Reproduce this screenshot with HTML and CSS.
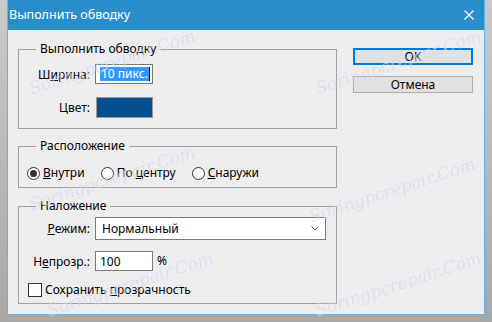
FILE: index.html
```html
<!DOCTYPE html>
<html>
<head>
<link rel="stylesheet" href="styles.css">
</head>
<body>
<div class="window">
 <div class="titlebar">
  <span class="title">Выполнить обводку</span>
  <svg class="close" width="10" height="10" viewBox="0 0 10 10"><path d="M0.5 0.5 L9.5 9.5 M9.5 0.5 L0.5 9.5" stroke="#fff" stroke-width="1.1" fill="none"/></svg>
 </div>
 <div class="main">
  <div class="left">
   <fieldset class="group g-stroke">
    <legend>Выполнить обводку</legend>
    <div class="fields">
     <label>Ш<u>и</u>рина:</label>
     <div class="input short"><span class="selected">10 пикс.</span><span class="caret"></span></div>
     <label>Цвет:</label>
     <div class="swatch"></div>
    </div>
   </fieldset>

   <fieldset class="group g-place">
    <legend>Расположение</legend>
    <div class="radios">
     <span class="radio checked"></span><span class="rlabel"><u>В</u>нутри</span>
     <span class="radio"></span><span class="rlabel">По <u>ц</u>ентру</span>
     <span class="radio"></span><span class="rlabel"><u>С</u>наружи</span>
    </div>
   </fieldset>

   <fieldset class="group g-blend">
    <legend>Наложение</legend>
    <div class="fields">
     <label><u>Р</u>ежим:</label>
     <div class="select"><span>Нормальный</span><svg class="chevron" width="8" height="5" viewBox="0 0 8 5"><path d="M0.5 0.5 L4 4 L7.5 0.5" stroke="#666" fill="none"/></svg></div>
     <label>Н<u>е</u>прозр.:</label>
     <div class="opacity"><div class="input short">100</div><span class="pct">%</span></div>
    </div>
    <div class="check"><span class="box"></span><span>Сохранить <u>п</u>розрачность</span></div>
   </fieldset>
  </div>

  <div class="buttons">
   <div class="btn default">OK</div>
   <div class="btn">Отмена</div>
  </div>
 </div>
</div>

<div class="watermarks">
 <span class="wm wm1">Soringpcrepair.Com</span>
 <span class="wm wm2">Soringpcrepair.Com</span>
 <span class="wm wm3">Soringpcrepair.Com</span>
 <span class="wm wm4">Soringpcrepair.Com</span>
 <span class="wm wm5">Soringpcrepair.Com</span>
 <span class="wm wm6">Soringpcrepair.Com</span>
</div>
</body>
</html>
```

FILE: styles.css
```css
body{
   position:relative;
   margin:0;
   height:322px;
   overflow:hidden;
   background:linear-gradient(#c9c9c9, #a8a8a8);
   font-family:"Noto Sans", "Open Sans", sans-serif;
   font-size:12px;
   color:#000;
}

.window{
   margin-left:7px;
   width:476px;
   height:314px;
   background:#ededed;
   border:1px solid #5db4f0;
   border-top:none;
}

.titlebar{
   height:30px;
   background:#2a8ecd;
   color:#fff;
   display:flex;
   align-items:center;
   justify-content:space-between;
   padding:0 10px 0 1px;
}

.title{
   font-size:12.5px;
   margin-top:-1px;
}

.main{
   display:flex;
   padding:11px 11px 0 10px;
}

.left{
   width:320px;
}

.group{
   margin:0;
   padding:0;
   border:1px solid #a2a2a2;
}

.group legend{
   margin-left:17px;
   padding:0 4px;
   line-height:16px;
}

.g-place{
   margin-top:9px;
}

.g-blend{
   margin-top:10px;
}

.fields{
   display:grid;
   grid-template-columns:71px auto;
   column-gap:5px;
   align-items:center;
}

.fields label{
   text-align:right;
}

.g-stroke .fields{
   padding:7px 0 10px;
   row-gap:13px;
}

.input{
   height:18px;
   border:1px solid #7a7a7a;
   background:#fff;
   display:flex;
   align-items:center;
   padding-left:4px;
   box-sizing:content-box;
}

.input.short{
   width:52px;
}

.selected{
   background:#3399ff;
   color:#fff;
   line-height:14px;
   padding:0 1px;
}

.caret{
   width:1px;
   height:14px;
   background:#000;
}

.swatch{
   width:55px;
   height:19px;
   border:1px solid #9a9a9a;
   background:#034f8f;
   margin-left:1px;
}

.radios{
   display:flex;
   align-items:center;
   padding:11px 0 6px 8px;
   line-height:16px;
}

.radio{
   width:11px;
   height:11px;
   border:1px solid #333;
   border-radius:50%;
   background:#fff;
   position:relative;
   margin-right:3px;
}

.radio.checked::after{
   content:"";
   position:absolute;
   left:2px;
   top:2px;
   width:7px;
   height:7px;
   border-radius:50%;
   background:#333;
}

.rlabel{
   margin-right:16px;
}

.g-blend .fields{
   padding:3px 10px 0 0;
   row-gap:11px;
}

.select{
   height:21px;
   border:1px solid #7a7a7a;
   background:#fff;
   display:flex;
   align-items:center;
   justify-content:space-between;
   padding:0 6px 0 6px;
}

.opacity{
   display:flex;
   align-items:center;
}

.pct{
   margin-left:4px;
   margin-top:-2px;
}

.check{
   display:flex;
   align-items:center;
   padding:11px 0 5px 9px;
   line-height:16px;
}

.box{
   width:12px;
   height:12px;
   border:1px solid #333;
   background:#fff;
   margin-right:3px;
}

.buttons{
   margin-left:16px;
   display:flex;
   flex-direction:column;
   gap:11px;
   padding-top:7px;
}

.btn{
   width:118px;
   height:15px;
   line-height:15px;
   text-align:center;
   background:#e1e1e1;
   border:1px solid #adadad;
}

.btn.default{
   width:116px;
   height:13px;
   line-height:13px;
   border:2px solid #0078d7;
}

.watermarks{
   position:absolute;
   left:0;
   top:0;
   width:492px;
   height:322px;
   pointer-events:none;
}

.wm{
   position:absolute;
   font-family:"DejaVu Serif", serif;
   font-style:italic;
   font-size:17px;
   color:rgba(150,162,218,0.3);
   text-shadow:0 0 1px rgba(255,255,255,0.6);
   white-space:nowrap;
   transform:translate(-50%, -50%) rotate(-18deg);
}

.wm1{ left:112px; top:62px; }
.wm2{ left:398px; top:62px; }
.wm3{ left:112px; top:178px; }
.wm4{ left:392px; top:190px; }
.wm5{ left:130px; top:284px; }
.wm6{ left:398px; top:284px; }
```
